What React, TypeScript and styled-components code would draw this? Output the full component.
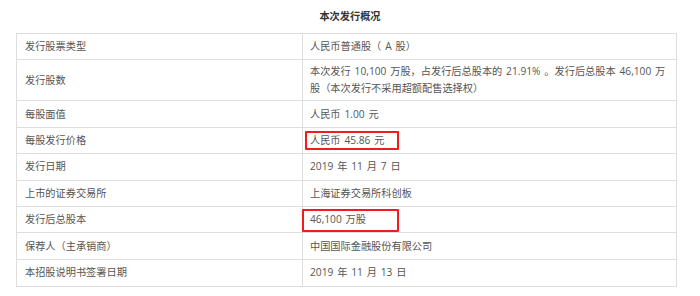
import React from "react";
import styled, { createGlobalStyle } from "styled-components";

const Global = createGlobalStyle`
  html, body { margin: 0; padding: 0; background: #fff; }
  body { font-family: "Open Sans", "Noto Sans CJK SC", sans-serif; }
`;

const Page = styled.div`
  width: 700px;
  height: 296px;
  overflow: hidden;
  background: #fff;
`;

const Title = styled.div`
  padding-top: 7px;
  height: 26px;
  line-height: 17px;
  text-align: center;
  font-family: "Noto Sans CJK SC", sans-serif;
  font-size: 10.2px;
  font-weight: 700;
  color: #333;
`;

const Table = styled.div`
  margin-left: 16px;
  width: 661px;
  box-sizing: border-box;
  border: 1px solid #dedede;
  font-size: 10.2px;
  word-spacing: 1.2px;
  color: #555;
`;

const Row = styled.div<{ $last?: boolean }>`
  display: grid;
  grid-template-columns: 285px 1fr;
  min-height: 26.4px;
  box-sizing: border-box;
  border-bottom: ${(p) => (p.$last ? "none" : "1px solid #dedede")};
`;

const Label = styled.div`
  display: flex;
  align-items: center;
  padding: 3px 8px;
  line-height: 17px;
`;

const Value = styled.div`
  position: relative;
  display: flex;
  align-items: center;
  padding: 3px 7px;
  line-height: 17px;
  border-left: 1px solid #dedede;
`;

const Mark = styled.span<{ $left: number; $top: number; $w: number; $h: number }>`
  position: absolute;
  left: ${(p) => p.$left}px;
  top: ${(p) => p.$top}px;
  width: ${(p) => p.$w}px;
  height: ${(p) => p.$h}px;
  box-sizing: border-box;
  border: 2px solid #f21c1c;
  border-radius: 1px;
  pointer-events: none;
`;

type Item = {
  label: string;
  value: React.ReactNode;
  mark?: { left: number; top: number; w: number; h: number };
};

const rows: Item[] = [
  { label: "发行股票类型", value: "人民币普通股（ A 股）" },
  {
    label: "发行股数",
    value: (
      <span>
        本次发行 10,100 万股，占发行后总股本的 21.91% 。发行后总股本 46,100 万
        <br />
        股（本次发行不采用超额配售选择权）
      </span>
    ),
  },
  { label: "每股面值", value: "人民币 1.00 元" },
  {
    label: "每股发行价格",
    value: "人民币 45.86 元",
    mark: { left: 2, top: 3, w: 94, h: 19 },
  },
  { label: "发行日期", value: "2019 年 11 月 7 日" },
  { label: "上市的证券交易所", value: "上海证券交易所科创板" },
  {
    label: "发行后总股本",
    value: "46,100 万股",
    mark: { left: -1, top: 2, w: 97, h: 23 },
  },
  { label: "保荐人（主承销商）", value: "中国国际金融股份有限公司" },
  { label: "本招股说明书签署日期", value: "2019 年 11 月 13 日" },
];

export default function App() {
  return (
    <Page>
      <Global />
      <Title>本次发行概况</Title>
      <Table>
        {rows.map((r, i) => (
          <Row key={r.label} $last={i === rows.length - 1}>
            <Label>{r.label}</Label>
            <Value>
              {r.value}
              {r.mark && (
                <Mark $left={r.mark.left} $top={r.mark.top} $w={r.mark.w} $h={r.mark.h} />
              )}
            </Value>
          </Row>
        ))}
      </Table>
    </Page>
  );
}
